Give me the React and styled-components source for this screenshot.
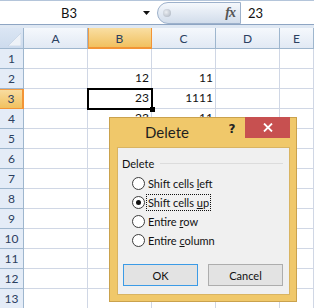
import React from "react";
import styled, { createGlobalStyle, css } from "styled-components";

const Global = createGlobalStyle`
  html, body { margin: 0; padding: 0; background: #fff; }
  body { font-family: "Lato", "Liberation Sans", sans-serif; overflow: hidden; }
`;

const Page = styled.div`
  position: relative;
  width: 314px;
  height: 308px;
  overflow: hidden;
  background: #dfe8f3;
`;

const FormulaBar = styled.div`
  display: flex;
  height: 25px;
  box-sizing: border-box;
  border-top: 1px solid #b4c5da;
  border-bottom: 1px solid #8ea5c3;
  background: #fff;
  margin-bottom: 3px;
`;

const NameBox = styled.div`
  width: 155px;
  display: flex;
  align-items: center;
  font-size: 13px;
  color: #111;
`;

const NameText = styled.span`
  flex: 1;
  text-align: center;
`;

const DropArrow = styled.span`
  width: 17px;
  display: flex;
  justify-content: center;
  align-items: center;
`;

const Pill = styled.div`
  width: 84px;
  box-sizing: border-box;
  margin: 1px 0 0 2px;
  border: 1px solid #9db1cb;
  border-radius: 11px 0 0 11px;
  background: linear-gradient(#f5f8fc, #d2ddeb);
  display: flex;
  align-items: center;
  justify-content: space-between;
  padding: 0 5px 0 5px;
`;

const Dot = styled.span`
  width: 8px;
  height: 8px;
  border-radius: 50%;
  background: radial-gradient(circle at 40% 40%, #eceff3, #a5aebb);
`;

const Fx = styled.span`
  font-family: "Liberation Serif", serif;
  font-style: italic;
  font-weight: bold;
  font-size: 14px;
  color: #555;
  letter-spacing: -1px;
`;

const FormulaInput = styled.div`
  flex: 1;
  display: flex;
  align-items: center;
  padding-left: 7px;
  font-size: 13px;
  color: #111;
`;

const Sheet = styled.div`
  display: grid;
  grid-template-columns: 24px repeat(4, 64px) 1fr;
  grid-template-rows: 21px;
  grid-auto-rows: 20px;
  background: #fff;
  font-size: 12px;
`;

const headerBase = css`
  box-sizing: border-box;
  border-right: 1px solid #9eb6ce;
  border-bottom: 1px solid #9eb6ce;
  display: flex;
  align-items: center;
  justify-content: center;
  color: #2b4060;
`;

const Corner = styled.div`
  ${headerBase};
  background: linear-gradient(#dbe6f4, #cddbed);
  align-items: flex-end;
  justify-content: flex-end;
  padding: 0 2px 2px 0;
`;

const ColHeader = styled.div`
  ${headerBase};
  padding-top: 1px;
  background: ${(p) =>
    p.$selected
      ? "linear-gradient(#f9dea3, #f1c15f)"
      : "linear-gradient(#f5f8fc, #e1e9f4)"};
  ${(p) =>
    p.$selected &&
    css`
      border-right-color: #f29436;
      border-bottom: 2px solid #f29436;
      box-shadow: inset 1px 0 0 #f29c44;
    `}
`;

const RowHeader = styled.div`
  ${headerBase};
  background: ${(p) =>
    p.$selected ? "linear-gradient(#f9dea3, #f1c15f)" : "#e4ecf7"};
  ${(p) =>
    p.$selected &&
    css`
      border-right: 2px solid #f29436;
      border-bottom-color: #f29436;
      box-shadow: inset 0 1px 0 #f29c44;
    `}
`;

const Cell = styled.div`
  position: relative;
  box-sizing: border-box;
  border-right: 1px solid #d0d7e5;
  border-bottom: 1px solid #d0d7e5;
  display: flex;
  align-items: flex-end;
  justify-content: flex-end;
  padding: 0 2px 3px 0;
  color: #111;
  line-height: 14px;
`;

const Selection = styled.div`
  position: absolute;
  top: -1px;
  left: -1px;
  right: -2px;
  bottom: -2px;
  border: 2px solid #000;
  z-index: 2;
  pointer-events: none;
`;

const FillHandle = styled.div`
  position: absolute;
  right: -4px;
  bottom: -4px;
  width: 5px;
  height: 5px;
  background: #000;
  z-index: 3;
`;

const Dialog = styled.div`
  position: absolute;
  left: 109px;
  top: 117px;
  width: 188px;
  height: 185px;
  box-sizing: border-box;
  background: #f0c86a;
  border: 1px solid #caa24d;
  padding: 0 6px 6px 7px;
  display: flex;
  flex-direction: column;
  z-index: 5;
`;

const TitleBar = styled.div`
  height: 29px;
  display: flex;
  align-items: flex-start;
`;

const Title = styled.div`
  flex: 1;
  align-self: center;
  padding-left: 28px;
  padding-bottom: 1px;
  font-size: 15px;
  color: #1e1e1e;
`;

const HelpButton = styled.div`
  width: 26px;
  height: 21px;
  display: flex;
  align-items: center;
  justify-content: center;
  font-family: "DejaVu Sans", sans-serif;
  font-weight: bold;
  font-size: 12px;
  color: #222;
`;

const CloseButton = styled.div`
  width: 45px;
  height: 21px;
  margin-top: -1px;
  background: #c75050;
  display: flex;
  align-items: center;
  justify-content: center;
`;

const Content = styled.div`
  flex: 1;
  background: #f0f0f0;
  border: 1px solid #d9b462;
  display: flex;
  flex-direction: column;
  padding: 0 0 0 4px;
  font-size: 11px;
  color: #111;
`;

const GroupHeader = styled.div`
  display: flex;
  align-items: center;
  gap: 6px;
  margin-top: 8px;
  margin-right: 6px;
  height: 14px;
`;

const GroupLine = styled.div`
  flex: 1;
  height: 1px;
  background: #dcdcdc;
`;

const RadioList = styled.div`
  display: flex;
  flex-direction: column;
  margin-top: 4px;
  padding-left: 10px;
`;

const RadioRow = styled.div`
  height: 19px;
  display: flex;
  align-items: center;
  gap: 2px;
`;

const RadioCircle = styled.span`
  width: 13px;
  height: 13px;
  box-sizing: border-box;
  border-radius: 50%;
  border: 1px solid #3c3c3c;
  background: #fff;
  display: flex;
  align-items: center;
  justify-content: center;
  &::after {
    content: "";
    width: 5px;
    height: 5px;
    border-radius: 50%;
    background: ${(p) => (p.$checked ? "#111" : "transparent")};
  }
`;

const RadioLabel = styled.span`
  padding: 1px 1px;
  outline: ${(p) => (p.$focused ? "1px dotted #111" : "none")};
  line-height: 13px;
`;

const ButtonRow = styled.div`
  display: flex;
  gap: 10px;
  margin-top: auto;
  margin-bottom: 8px;
  padding-left: 1px;
`;

const Button = styled.div`
  width: 75px;
  height: 22px;
  box-sizing: border-box;
  border: 1px solid ${(p) => (p.$default ? "#3c9be6" : "#adadad")};
  background: #e3e3e3;
  display: flex;
  align-items: center;
  justify-content: center;
  font-size: 11px;
  color: #111;
`;

const cols = ["A", "B", "C", "D", "E"];
const data = {
  2: { B: "12", C: "11" },
  3: { B: "23", C: "1111" },
  4: { B: "23", C: "11" },
};

const radios = [
  { pre: "Shift cells ", key: "l", post: "eft" },
  { pre: "Shift cells ", key: "u", post: "p", checked: true },
  { pre: "Entire ", key: "r", post: "ow" },
  { pre: "Entire ", key: "c", post: "olumn" },
];

export default function App() {
  const rows = Array.from({ length: 13 }, (_, i) => i + 1);
  return (
    <Page>
      <Global />
      <FormulaBar>
        <NameBox>
          <NameText>B3</NameText>
          <DropArrow>
            <svg width="7" height="4" viewBox="0 0 7 4">
              <path d="M0 0h7L3.5 4z" fill="#111" />
            </svg>
          </DropArrow>
        </NameBox>
        <Pill>
          <Dot />
          <Fx>fx</Fx>
        </Pill>
        <FormulaInput>23</FormulaInput>
      </FormulaBar>
      <Sheet>
        <Corner>
          <svg width="13" height="13" viewBox="0 0 13 13">
            <path d="M13 0V13H0z" fill="#eef2f8" stroke="#b9c9dc" strokeWidth="0.5" />
          </svg>
        </Corner>
        {cols.map((c) => (
          <ColHeader key={c} $selected={c === "B"}>
            {c}
          </ColHeader>
        ))}
        {rows.map((r) => (
          <React.Fragment key={r}>
            <RowHeader $selected={r === 3}>{r}</RowHeader>
            {cols.map((c) => (
              <Cell key={c}>
                {data[r] && data[r][c]}
                {r === 3 && c === "B" && (
                  <>
                    <Selection />
                    <FillHandle />
                  </>
                )}
              </Cell>
            ))}
          </React.Fragment>
        ))}
      </Sheet>
      <Dialog>
        <TitleBar>
          <Title>Delete</Title>
          <HelpButton>?</HelpButton>
          <CloseButton>
            <svg width="10" height="9" viewBox="0 0 10 9">
              <path d="M1 0.5l8 8M9 0.5l-8 8" stroke="#fff" strokeWidth="1.8" />
            </svg>
          </CloseButton>
        </TitleBar>
        <Content>
          <GroupHeader>
            <span>Delete</span>
            <GroupLine />
          </GroupHeader>
          <RadioList>
            {radios.map((r, i) => (
              <RadioRow key={i}>
                <RadioCircle $checked={r.checked} />
                <RadioLabel $focused={r.checked}>
                  {r.pre}
                  <u>{r.key}</u>
                  {r.post}
                </RadioLabel>
              </RadioRow>
            ))}
          </RadioList>
          <ButtonRow>
            <Button $default>OK</Button>
            <Button>Cancel</Button>
          </ButtonRow>
        </Content>
      </Dialog>
    </Page>
  );
}
